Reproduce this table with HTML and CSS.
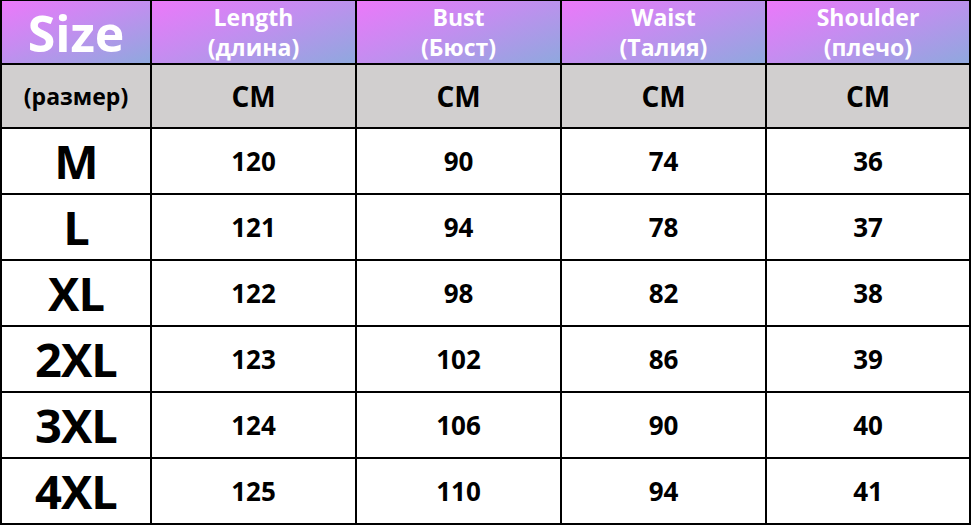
FILE: index.html
```html
<!DOCTYPE html>
<html lang="ru">
<head>
<meta charset="utf-8">
<title>Size chart</title>
<link rel="stylesheet" href="styles.css">
</head>
<body>
<div class="chart">
  <div class="cell head size-title">Size</div>
  <div class="cell head"><span>Length</span><span>(длина)</span></div>
  <div class="cell head"><span>Bust</span><span>(Бюст)</span></div>
  <div class="cell head"><span>Waist</span><span>(Талия)</span></div>
  <div class="cell head"><span>Shoulder</span><span>(плечо)</span></div>

  <div class="cell unit small">(размер)</div>
  <div class="cell unit">CM</div>
  <div class="cell unit">CM</div>
  <div class="cell unit">CM</div>
  <div class="cell unit">CM</div>

  <div class="cell size">M</div><div class="cell num">120</div><div class="cell num">90</div><div class="cell num">74</div><div class="cell num">36</div>
  <div class="cell size">L</div><div class="cell num">121</div><div class="cell num">94</div><div class="cell num">78</div><div class="cell num">37</div>
  <div class="cell size">XL</div><div class="cell num">122</div><div class="cell num">98</div><div class="cell num">82</div><div class="cell num">38</div>
  <div class="cell size">2XL</div><div class="cell num">123</div><div class="cell num">102</div><div class="cell num">86</div><div class="cell num">39</div>
  <div class="cell size">3XL</div><div class="cell num">124</div><div class="cell num">106</div><div class="cell num">90</div><div class="cell num">40</div>
  <div class="cell size">4XL</div><div class="cell num">125</div><div class="cell num">110</div><div class="cell num">94</div><div class="cell num">41</div>
</div>
</body>
</html>
```
FILE: styles.css
```css
html, body {
  margin: 0;
  padding: 0;
  background: #ffffff;
}
body {
  font-family: "Open Sans", "Noto Sans", "DejaVu Sans", sans-serif;
  font-weight: 700;
}
.chart {
  width: 971px;
  height: 525px;
  box-sizing: border-box;
  display: grid;
  grid-template-columns: 148px 203px 203px 203px 202px;
  grid-template-rows: 62px 62px repeat(6, 64px);
  gap: 2px;
  padding: 1px 2px 2px 2px;
  background: #000000;
}
.cell {
  display: flex;
  flex-direction: column;
  align-items: center;
  justify-content: center;
  background: #ffffff;
  color: #000000;
  white-space: nowrap;
}
.head {
  background: linear-gradient(160deg, #ec78fa 0%, #c48df0 45%, #8fa8de 100%);
  color: #ffffff;
  font-size: 23px;
  line-height: 30px;
}
.size-title {
  font-size: 50px;
  line-height: 1;
  padding-top: 2px;
}
.unit {
  background: #d1cfcf;
  font-size: 28px;
}
.unit.small {
  font-size: 23px;
}
.size {
  font-size: 47px;
  letter-spacing: -1px;
}
.num {
  font-size: 26px;
}
```
